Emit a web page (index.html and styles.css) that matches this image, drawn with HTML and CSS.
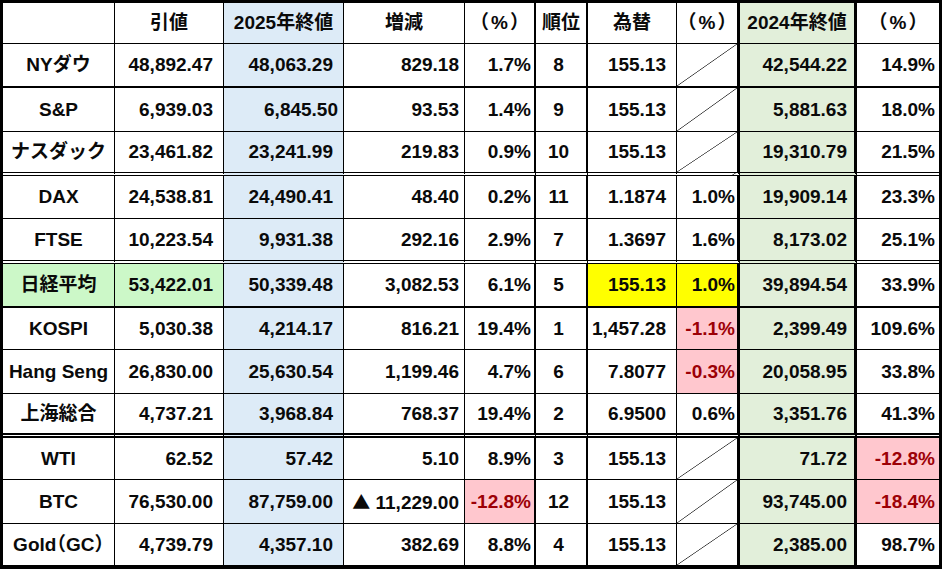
FILE: index.html
```html
<!DOCTYPE html>
<html lang="ja">
<head>
<meta charset="utf-8">
<title>Market table</title>
<link rel="stylesheet" href="styles.css">
</head>
<body>
<table class="mkt">
  <colgroup>
    <col class="w1"><col class="w2"><col class="w3"><col class="w4"><col class="w5">
    <col class="w6"><col class="w7"><col class="w8"><col class="w9"><col class="w10">
  </colgroup>
  <tr class="hd">
    <td class="c1"></td><td class="c2">引値</td><td class="c3">2025年終値</td><td class="c4">増減</td><td class="c5 pc">（%）</td>
    <td class="c6">順位</td><td class="c7">為替</td><td class="c8 pc">（%）</td><td class="c9">2024年終値</td><td class="c10 pc">（%）</td>
  </tr>
  <tr class="h44 b2">
    <td class="c1">NYダウ</td><td class="c2">48,892.47</td><td class="c3">48,063.29</td><td class="c4">829.18</td><td class="c5">1.7%</td>
    <td class="c6">8</td><td class="c7">155.13</td><td class="c8 diag"></td><td class="c9">42,544.22</td><td class="c10">14.9%</td>
  </tr>
  <tr class="h44">
    <td class="c1">S&amp;P</td><td class="c2">6,939.03</td><td class="c3 shift">6,845.50</td><td class="c4">93.53</td><td class="c5">1.4%</td>
    <td class="c6">9</td><td class="c7">155.13</td><td class="c8 diag"></td><td class="c9">5,881.63</td><td class="c10">18.0%</td>
  </tr>
  <tr class="h44 dbl">
    <td class="c1">ナスダック</td><td class="c2">23,461.82</td><td class="c3">23,241.99</td><td class="c4">219.83</td><td class="c5">0.9%</td>
    <td class="c6">10</td><td class="c7">155.13</td><td class="c8 diag"></td><td class="c9">19,310.79</td><td class="c10">21.5%</td>
  </tr>
  <tr class="h43">
    <td class="c1">DAX</td><td class="c2">24,538.81</td><td class="c3">24,490.41</td><td class="c4">48.40</td><td class="c5">0.2%</td>
    <td class="c6">11</td><td class="c7">1.1874</td><td class="c8">1.0%</td><td class="c9">19,909.14</td><td class="c10">23.3%</td>
  </tr>
  <tr class="h45 dbl">
    <td class="c1">FTSE</td><td class="c2">10,223.54</td><td class="c3">9,931.38</td><td class="c4">292.16</td><td class="c5">2.9%</td>
    <td class="c6">7</td><td class="c7">1.3697</td><td class="c8">1.6%</td><td class="c9">8,173.02</td><td class="c10">25.1%</td>
  </tr>
  <tr class="h44 b2">
    <td class="c1 lg">日経平均</td><td class="c2 lg">53,422.01</td><td class="c3">50,339.48</td><td class="c4">3,082.53</td><td class="c5">6.1%</td>
    <td class="c6">5</td><td class="c7 yl">155.13</td><td class="c8 yl">1.0%</td><td class="c9">39,894.54</td><td class="c10">33.9%</td>
  </tr>
  <tr class="h42">
    <td class="c1">KOSPI</td><td class="c2">5,030.38</td><td class="c3">4,214.17</td><td class="c4">816.21</td><td class="c5">19.4%</td>
    <td class="c6">1</td><td class="c7">1,457.28</td><td class="c8 neg">-1.1%</td><td class="c9">2,399.49</td><td class="c10">109.6%</td>
  </tr>
  <tr class="h44">
    <td class="c1">Hang Seng</td><td class="c2">26,830.00</td><td class="c3">25,630.54</td><td class="c4">1,199.46</td><td class="c5">4.7%</td>
    <td class="c6">6</td><td class="c7">7.8077</td><td class="c8 neg">-0.3%</td><td class="c9">20,058.95</td><td class="c10">33.8%</td>
  </tr>
  <tr class="h44 dbl5">
    <td class="c1">上海総合</td><td class="c2">4,737.21</td><td class="c3">3,968.84</td><td class="c4">768.37</td><td class="c5">19.4%</td>
    <td class="c6">2</td><td class="c7">6.9500</td><td class="c8">0.6%</td><td class="c9">3,351.76</td><td class="c10">41.3%</td>
  </tr>
  <tr class="h42">
    <td class="c1">WTI</td><td class="c2">62.52</td><td class="c3">57.42</td><td class="c4">5.10</td><td class="c5">8.9%</td>
    <td class="c6">3</td><td class="c7">155.13</td><td class="c8 diag"></td><td class="c9">71.72</td><td class="c10 neg">-12.8%</td>
  </tr>
  <tr class="h44">
    <td class="c1">BTC</td><td class="c2">76,530.00</td><td class="c3">87,759.00</td><td class="c4"><span class="tri">▲</span> 11,229.00</td><td class="c5 neg">-12.8%</td>
    <td class="c6">12</td><td class="c7">155.13</td><td class="c8 diag"></td><td class="c9">93,745.00</td><td class="c10 neg">-18.4%</td>
  </tr>
  <tr class="h41 last">
    <td class="c1">Gold（GC）</td><td class="c2">4,739.79</td><td class="c3">4,357.10</td><td class="c4">382.69</td><td class="c5">8.8%</td>
    <td class="c6">4</td><td class="c7">155.13</td><td class="c8 diag"></td><td class="c9">2,385.00</td><td class="c10">98.7%</td>
  </tr>
</table>
</body>
</html>
```

FILE: styles.css
```css
html, body {
  margin: 0;
  padding: 0;
  background: #ffffff;
}

.mkt {
  width: 942px;
  table-layout: fixed;
  border-collapse: separate;
  border-spacing: 0;
  border-top: 3px solid #000;
  border-left: 3px solid #000;
  border-right: 3px solid #000;
  border-bottom: 4px solid #000;
  font-family: "Liberation Sans", "Noto Sans CJK JP", sans-serif;
  font-feature-settings: "halt";
  font-weight: 700;
  font-size: 19px;
  color: #0a0a0a;
}

.w1 { width: 112px; }
.w2 { width: 109px; }
.w3 { width: 120px; }
.w4 { width: 121px; }
.w5 { width: 71px; }
.w6 { width: 52px; }
.w7 { width: 89px; }
.w8 { width: 63px; }
.w9 { width: 117px; }
.w10 { width: 82px; }

.mkt td {
  box-sizing: border-box;
  padding: 0;
  white-space: nowrap;
  overflow: hidden;
  vertical-align: middle;
  text-align: right;
  border-right: 1px solid #000;
  border-bottom: 1px solid #000;
  line-height: 22px;
}

.mkt td.c5,
.mkt td.c6 { border-right-width: 2px; }
.mkt td.c8,
.mkt td.c9 { border-right-width: 3px; }
.mkt td.c10 { border-right: none; }

.hd { height: 41px; }
.h41 { height: 41px; }
.h42 { height: 42px; }
.h43 { height: 43px; }
.h44 { height: 44px; }
.h45 { height: 45px; }

.b2 td { border-bottom: 2px solid #000; }
.dbl td { border-bottom: 4px double #000; }
.dbl5 td { border-bottom: 5px double #000; }
.last td { border-bottom: none; }

.c1 { text-align: center !important; }
.c2 { padding-right: 10px !important; }
.c3 { padding-right: 10px !important; background: #ddebf7; }
.c3.shift { padding-right: 5px !important; }
.c4 { padding-right: 5px !important; }
.c5 { padding-right: 3px !important; }
.c6 { text-align: center !important; padding-right: 5px !important; }
.c7 { padding-right: 10px !important; }
.c8 { padding-right: 2px !important; }
.c9 { padding-right: 7px !important; background: #e2efda; }
.c10 { padding-right: 4px !important; }

.hd td {
  text-align: center !important;
  padding-right: 0 !important;
}
.hd td.pc {
  letter-spacing: 2px;
  padding-left: 2px !important;
}

.tri {
  font-family: "Noto Sans CJK JP", sans-serif;
  font-size: 18px;
}

.lg { background: #ccf8c8; }
.yl { background: #ffff00; }
.neg { background: #ffc7ce; color: #9c0006; }

.diag {
  background: linear-gradient(to bottom right,
    transparent calc(50% - 0.7px),
    #333 50%,
    transparent calc(50% + 0.7px));
}
```
